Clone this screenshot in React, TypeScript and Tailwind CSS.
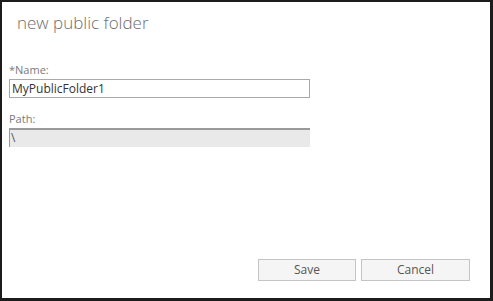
import React, { useState } from 'react';

const App: React.FC = () => {
  const [name, setName] = useState('MyPublicFolder1');

  return (
    <div
      className="w-[493px] h-[301px] bg-white border-l-2 border-t-2 border-r-[3px] border-b-[3px] border-[#1c1c1c] flex flex-col"
      style={{ fontFamily: '"Open Sans", "Noto Sans", sans-serif' }}
    >
      <h1 className="pl-[15px] pt-[10px] text-[17px] font-light text-[#6d6d6d] leading-[21px]">
        new public folder
      </h1>

      <div className="pl-[7px] pt-[30px] flex flex-col">
        <label className="text-[11px] leading-[14px] text-[#7a7a7a]">*Name:</label>
        <input
          value={name}
          onChange={(e) => setName(e.target.value)}
          className="mt-[2px] w-[301px] h-[19px] border border-[#a9a9a9] px-[2px] text-[12px] text-[#333] outline-none"
        />

        <label className="mt-[14px] text-[11px] leading-[14px] text-[#7a7a7a]">Path:</label>
        <div className="mt-[2px] w-[301px] h-[19px] bg-[#e9e9e9] border-t-2 border-l border-[#9a9a9a] px-[1px] text-[12px] leading-[16px] text-[#555]">
          \
        </div>
      </div>

      <div className="mt-auto mb-[17px] flex justify-end gap-[5px] pr-[20px]">
        <button className="w-[98px] h-[22px] bg-[#f5f5f5] border border-[#c4c4c4] text-[12px] text-[#555]">
          Save
        </button>
        <button className="w-[109px] h-[22px] bg-[#f5f5f5] border border-[#c4c4c4] text-[12px] text-[#555]">
          Cancel
        </button>
      </div>
    </div>
  );
};

export default App;
